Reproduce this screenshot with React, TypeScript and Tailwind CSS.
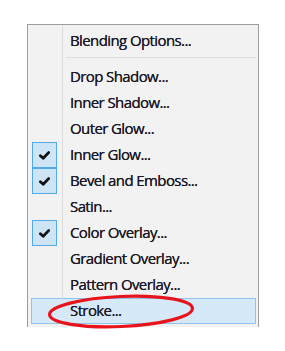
import { ReactNode } from 'react';

type MenuRow = {
  label: string;
  checked?: boolean;
  selected?: boolean;
};

const effectRows: MenuRow[] = [
  { label: 'Drop Shadow...' },
  { label: 'Inner Shadow...' },
  { label: 'Outer Glow...' },
  { label: 'Inner Glow...', checked: true },
  { label: 'Bevel and Emboss...', checked: true },
  { label: 'Satin...' },
  { label: 'Color Overlay...', checked: true },
  { label: 'Gradient Overlay...' },
  { label: 'Pattern Overlay...' },
  { label: 'Stroke...', selected: true },
];

function CheckMark() {
  return (
    <svg width="11" height="9" viewBox="0 0 11 9">
      <path d="M1.4 4.8 L4.2 7.3 L9.6 1.6" fill="none" stroke="#111" strokeWidth="2.8" strokeLinecap="round" strokeLinejoin="round" />
    </svg>
  );
}

function RedCircle() {
  return (
    <svg className="pointer-events-none absolute left-[15px] top-[-5px]" width="148" height="35" viewBox="0 0 148 35">
      <ellipse cx="74" cy="17.5" rx="71.5" ry="15" fill="none" stroke="#e8141b" strokeWidth="3.2" transform="rotate(-2.5 74 17.5)" />
    </svg>
  );
}

function Row({ row, children }: { row: MenuRow; children?: ReactNode }) {
  return (
    <div
      className={`relative flex h-[26px] items-center ${
        row.selected ? 'border border-[#90c3ef] bg-[#d6e9f9]' : 'border border-transparent'
      }`}
    >
      <div className="flex h-[26px] w-[31px] shrink-0 items-center">
        {row.checked && (
          <div className="flex h-[26px] w-[25px] items-center justify-center border border-[#52a9ec] bg-[#cde5f7]">
            <CheckMark />
          </div>
        )}
      </div>
      <span className="pb-[2px] pl-[7px] leading-none tracking-[-0.6px] [text-shadow:0_0_0.3px_#1c1c2a]">{row.label}</span>
      {children}
    </div>
  );
}

export default function App() {
  return (
    <div className="h-[351px] w-[285px] bg-white pl-[27px] pt-[24px] font-['Open_Sans','Noto_Sans',sans-serif] text-[15px] text-[#1a1a26]">
      <div className="relative h-[303px] w-[232px] border-x border-t border-[#9d9d9d] bg-[#f2f2f2] pb-[3px] pl-[3px] pr-[2px] pt-[3px]">
        <div className="absolute bottom-0 left-[34px] top-0 w-px bg-[#dcdcdc]" />
        <Row row={{ label: 'Blending Options...' }} />
        <div className="ml-[35px] mt-[3px] mb-[6px] h-px bg-[#dcdcdc]" />
        {effectRows.map((row) => (
          <Row key={row.label} row={row}>
            {row.selected && <RedCircle />}
          </Row>
        ))}
      </div>
    </div>
  );
}
